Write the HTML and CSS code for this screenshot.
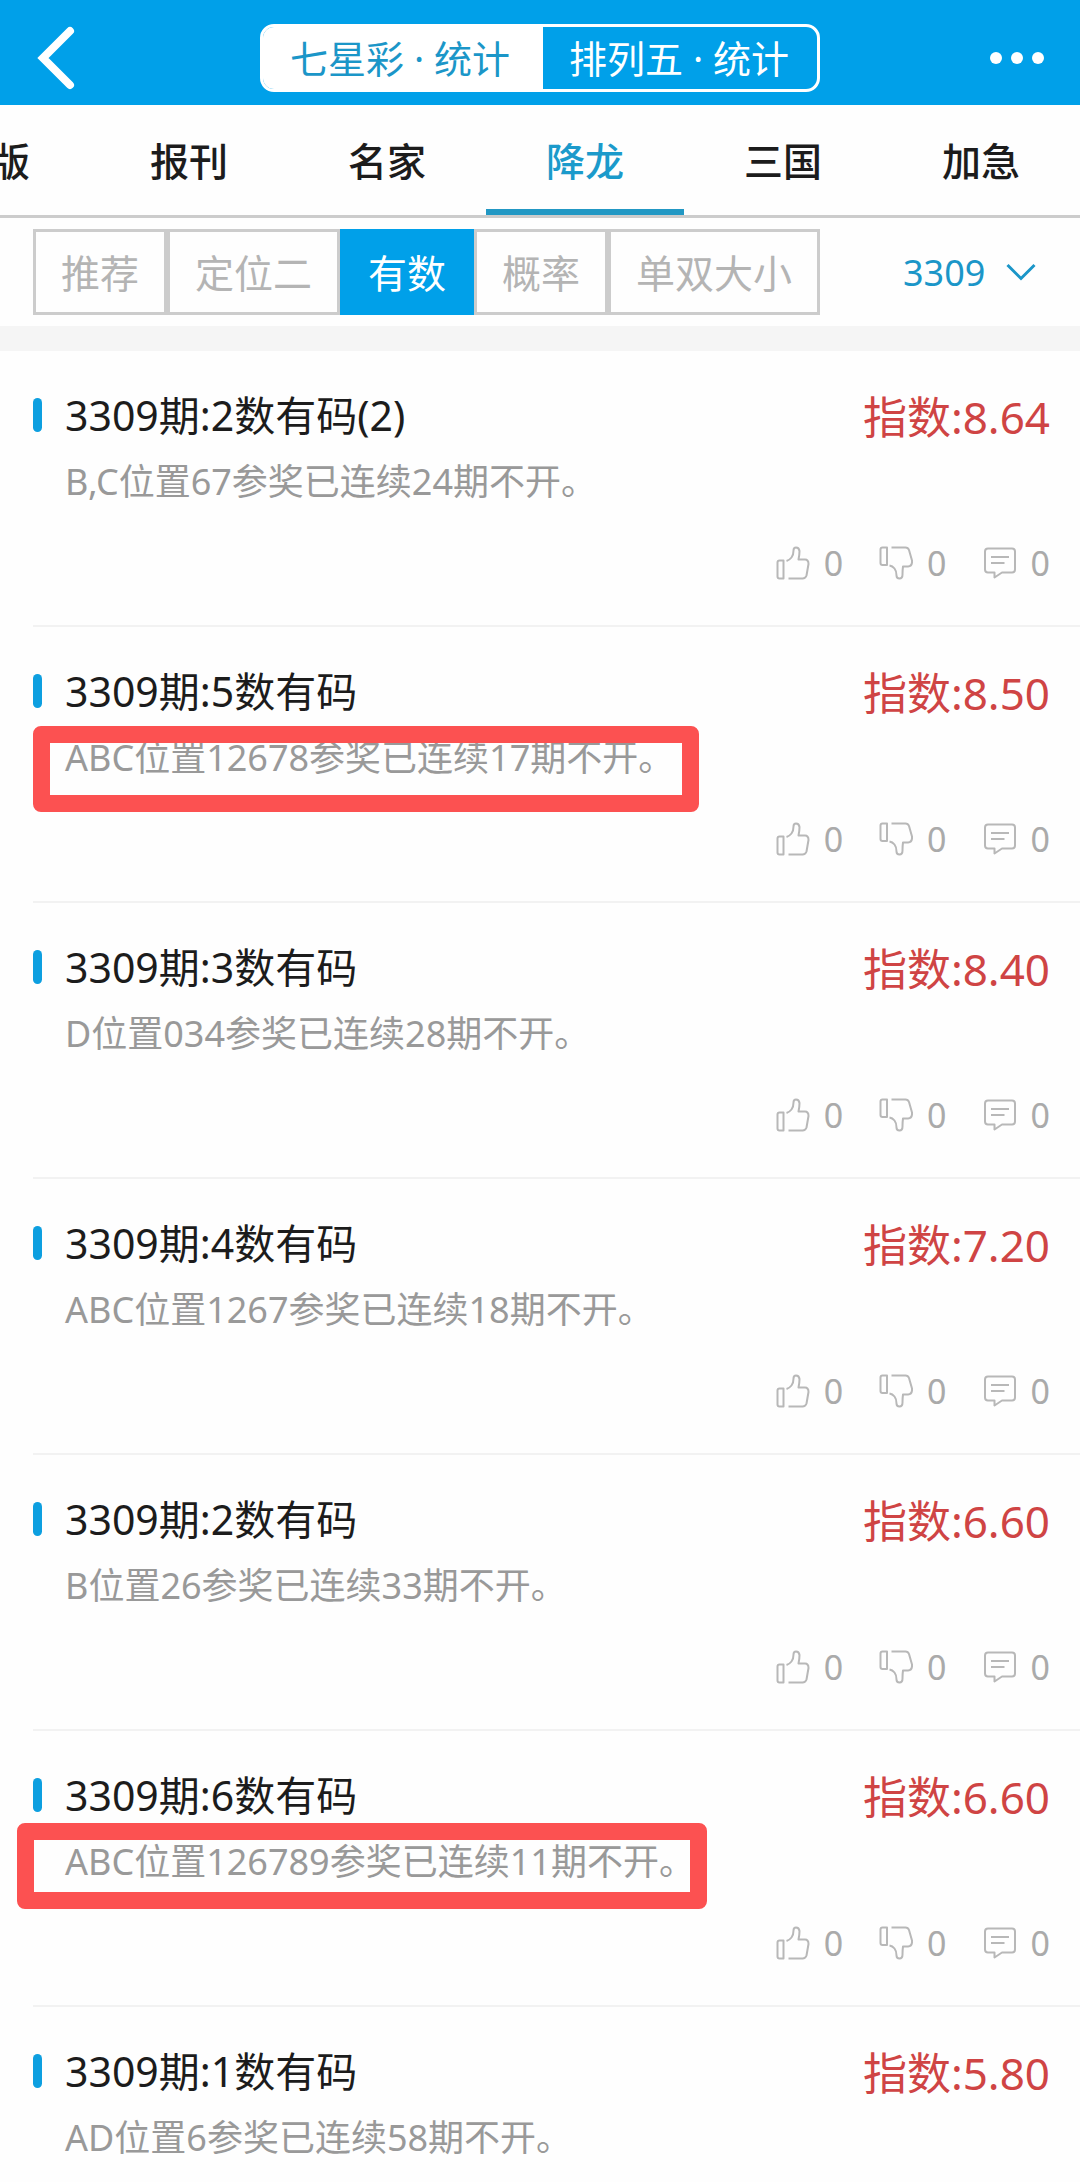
FILE: index.html
```html
<!DOCTYPE html>
<html lang="zh-CN">
<head>
<meta charset="utf-8">
<meta name="viewport" content="width=device-width, initial-scale=1">
<title>排列五 · 统计</title>
<link rel="stylesheet" href="styles.css">
</head>
<body>
<svg class="sprite" width="0" height="0" aria-hidden="true">
  <symbol id="like" viewBox="0 0 34 34">
    <path d="M7.500 14.500H3.500Q1.500 14.500 1.500 16.500V30.500Q1.500 32.500 3.500 32.500H7.500ZM12.500 32.500H26.500Q29.500 32.500 30.500 29.500L32.500 18Q32.500 13.500 29 13.500H22.500Q23.500 9 23.500 5Q23 1.500 20 1.500Q17.500 1.500 17.500 4.500Q17.500 9 15.500 11.500T10.500 15"/>
  </symbol>
  <symbol id="dislike" viewBox="0 0 34 34">
    <path d="M8 1.500H3.500Q1.500 1.500 1.500 3.500V17Q1.500 19 3.500 19H8ZM12.500 1.500H26.500Q29 1.500 30 4L33 14.500Q33.500 20 29 20.500H24Q23.500 24 23.500 28.500Q23.500 32.500 20.500 32.500Q17.500 32.500 17.500 29.500Q17.500 25 15.500 22.500T10.500 19.500"/>
  </symbol>
  <symbol id="comment" viewBox="0 0 34 34">
    <path d="M5 2.500H29Q32 2.500 32 5.500V23.500Q32 26.500 29 26.500H19L11.500 31.500V26.500H5Q2 26.500 2 23.500V5.500Q2 2.500 5 2.500ZM8 11H26M8 17H21.500"/>
  </symbol>
</svg>

<header class="topbar">
  <button class="icon-button" type="button" aria-label="返回">
    <svg width="48" height="64" viewBox="0 0 48 64"><path class="back" d="M35 5 8 32 35 59"/></svg>
  </button>
  <div class="segments">
    <button class="segment segment--on" type="button">七星彩 · 统计</button>
    <button class="segment" type="button">排列五 · 统计</button>
  </div>
  <button class="icon-button" type="button" aria-label="更多">
    <svg width="56" height="16" viewBox="0 0 56 16"><circle cx="7" cy="8" r="6"/><circle cx="28" cy="8" r="6"/><circle cx="49" cy="8" r="6"/></svg>
  </button>
</header>

<nav class="tabs">
  <a class="tab tab--cut" href="#">版</a>
  <a class="tab" href="#">报刊</a>
  <a class="tab" href="#">名家</a>
  <a class="tab tab--on" href="#" aria-current="page">降龙</a>
  <a class="tab" href="#">三国</a>
  <a class="tab" href="#">加急</a>
</nav>

<div class="filters">
  <div class="filter-group">
    <button class="filter" type="button">推荐</button>
    <button class="filter" type="button">定位二</button>
    <button class="filter filter--on" type="button">有数</button>
    <button class="filter" type="button">概率</button>
    <button class="filter" type="button">单双大小</button>
  </div>
  <label class="issue">
    <select class="issue-select" aria-label="期号"><option>3309</option></select>
    <svg width="30" height="18" viewBox="0 0 30 18"><path d="M1.500 2 15 15.500 28.500 2"/></svg>
  </label>
</div>

<main class="list">
  <article class="item">
    <div class="head"><h2 class="title">3309期:2数有码(2)</h2><strong class="index">指数:8.64</strong></div>
    <p class="desc">B,C位置67参奖已连续24期不开。</p>
    <div class="actions">
      <button class="action" type="button" aria-label="赞"><svg><use href="#like"/></svg>0</button>
      <button class="action" type="button" aria-label="踩"><svg><use href="#dislike"/></svg>0</button>
      <button class="action" type="button" aria-label="评论"><svg><use href="#comment"/></svg>0</button>
    </div>
  </article>
  <article class="item">
    <div class="head"><h2 class="title">3309期:5数有码</h2><strong class="index">指数:8.50</strong></div>
    <p class="desc">ABC位置12678参奖已连续17期不开。<span class="mark mark--first"></span></p>
    <div class="actions">
      <button class="action" type="button" aria-label="赞"><svg><use href="#like"/></svg>0</button>
      <button class="action" type="button" aria-label="踩"><svg><use href="#dislike"/></svg>0</button>
      <button class="action" type="button" aria-label="评论"><svg><use href="#comment"/></svg>0</button>
    </div>
  </article>
  <article class="item">
    <div class="head"><h2 class="title">3309期:3数有码</h2><strong class="index">指数:8.40</strong></div>
    <p class="desc">D位置034参奖已连续28期不开。</p>
    <div class="actions">
      <button class="action" type="button" aria-label="赞"><svg><use href="#like"/></svg>0</button>
      <button class="action" type="button" aria-label="踩"><svg><use href="#dislike"/></svg>0</button>
      <button class="action" type="button" aria-label="评论"><svg><use href="#comment"/></svg>0</button>
    </div>
  </article>
  <article class="item">
    <div class="head"><h2 class="title">3309期:4数有码</h2><strong class="index">指数:7.20</strong></div>
    <p class="desc">ABC位置1267参奖已连续18期不开。</p>
    <div class="actions">
      <button class="action" type="button" aria-label="赞"><svg><use href="#like"/></svg>0</button>
      <button class="action" type="button" aria-label="踩"><svg><use href="#dislike"/></svg>0</button>
      <button class="action" type="button" aria-label="评论"><svg><use href="#comment"/></svg>0</button>
    </div>
  </article>
  <article class="item">
    <div class="head"><h2 class="title">3309期:2数有码</h2><strong class="index">指数:6.60</strong></div>
    <p class="desc">B位置26参奖已连续33期不开。</p>
    <div class="actions">
      <button class="action" type="button" aria-label="赞"><svg><use href="#like"/></svg>0</button>
      <button class="action" type="button" aria-label="踩"><svg><use href="#dislike"/></svg>0</button>
      <button class="action" type="button" aria-label="评论"><svg><use href="#comment"/></svg>0</button>
    </div>
  </article>
  <article class="item">
    <div class="head"><h2 class="title">3309期:6数有码</h2><strong class="index">指数:6.60</strong></div>
    <p class="desc">ABC位置126789参奖已连续11期不开。<span class="mark mark--second"></span></p>
    <div class="actions">
      <button class="action" type="button" aria-label="赞"><svg><use href="#like"/></svg>0</button>
      <button class="action" type="button" aria-label="踩"><svg><use href="#dislike"/></svg>0</button>
      <button class="action" type="button" aria-label="评论"><svg><use href="#comment"/></svg>0</button>
    </div>
  </article>
  <article class="item">
    <div class="head"><h2 class="title">3309期:1数有码</h2><strong class="index">指数:5.80</strong></div>
    <p class="desc">AD位置6参奖已连续58期不开。</p>
  </article>
</main>
</body>
</html>
```
FILE: styles.css
```css
* {
  box-sizing: border-box;
}

body {
  margin: 0;
  background: #fefefe;
  color: #1c1c1c;
  font-family: "Noto Sans", "Noto Sans CJK SC", sans-serif;
  font-size: 39px;
}

button,
select {
  margin: 0;
  padding: 0;
  border: 0;
  background: none;
  color: inherit;
  font: inherit;
  white-space: nowrap;
}

svg {
  display: block;
  flex: none;
}

.sprite {
  position: absolute;
}

/* Top bar */
.topbar {
  display: flex;
  align-items: center;
  justify-content: space-between;
  height: 105px;
  padding: 11px 35px 0;
  background: #00a0e9;
  color: #fff;
}

.icon-button {
  display: flex;
  width: 56px;
  fill: currentColor;
}

.back {
  fill: none;
  stroke: #fff;
  stroke-width: 8;
  stroke-linecap: round;
}

.segments {
  display: flex;
  height: 68px;
  border: 3px solid #fff;
  border-radius: 14px;
  overflow: hidden;
  font-size: 38px;
}

.segment {
  padding: 0 28px 0 26px;
  line-height: 60px;
}

.segment--on {
  padding: 0 33px 0 27px;
  background: #fff;
  color: #1b96c8;
}

/* Category tabs */
.tabs {
  display: flex;
  justify-content: flex-end;
  overflow: hidden;
  border-bottom: 3px solid #ccc;
}

.tab {
  flex: 0 0 198px;
  height: 110px;
  border-bottom: 6px solid transparent;
  color: inherit;
  font-weight: 500;
  line-height: 112px;
  text-align: center;
  text-decoration: none;
}

.tab--cut {
  padding-left: 39px;
}

.tab--on {
  border-color: #2298c4;
  color: #1b9acb;
}

/* Filters */
.filters {
  display: flex;
  align-items: center;
  justify-content: space-between;
  padding: 11px 44px 11px 33px;
  border-bottom: 25px solid #f5f5f5;
}

.filter-group {
  display: flex;
}

.filter {
  height: 86px;
  padding: 2px 25px 0;
  border: 3px solid #ccc;
  color: #b4b4b4;
  line-height: 78px;
}

.filter--on {
  border-color: #00a0e9;
  background: #00a0e9;
  color: #fff;
}

.issue {
  display: flex;
  align-items: center;
  gap: 20px;
  color: #1b96c8;
  font-size: 36px;
  fill: none;
  stroke: currentColor;
  stroke-width: 3;
}

.issue-select {
  appearance: none;
}

/* Records */
.item {
  margin-left: 33px;
  padding: 39px 30px 45px 0;
  border-bottom: 2px solid #f2f2f2;
}

.item:last-child {
  border-bottom: 0;
}

.head {
  display: flex;
  align-items: center;
  gap: 23px;
  height: 50px;
}

.head::before {
  content: "";
  width: 9px;
  height: 34px;
  border-radius: 5px;
  background: #0d9fe0;
}

.title {
  flex: 1;
  margin: 0;
  font-size: 41px;
  font-weight: 400;
  line-height: 50px;
}

.index {
  padding-top: 4px;
  color: #cf4444;
  font-size: 44px;
  font-weight: 400;
  line-height: 50px;
}

.desc {
  position: relative;
  margin: 20px 0 42px 32px;
  color: #999;
  font-size: 36px;
  line-height: 44px;
}

.actions {
  display: flex;
  justify-content: flex-end;
  gap: 36px;
}

.action {
  display: flex;
  align-items: center;
  gap: 14px;
  color: #aaa;
  font-size: 34px;
  line-height: 34px;
}

.action svg {
  width: 34px;
  height: 34px;
  fill: none;
  stroke: #b8b8b8;
  stroke-width: 2;
  stroke-linejoin: round;
}

/* Hand-drawn highlight frames laid over a description */
.mark {
  position: absolute;
  height: 86px;
  border: 17px solid #fc5151;
  border-radius: 8px;
}

.mark--first {
  top: -10px;
  left: -32px;
  width: 666px;
}

.mark--second {
  top: -17px;
  left: -48px;
  width: 690px;
}
```
